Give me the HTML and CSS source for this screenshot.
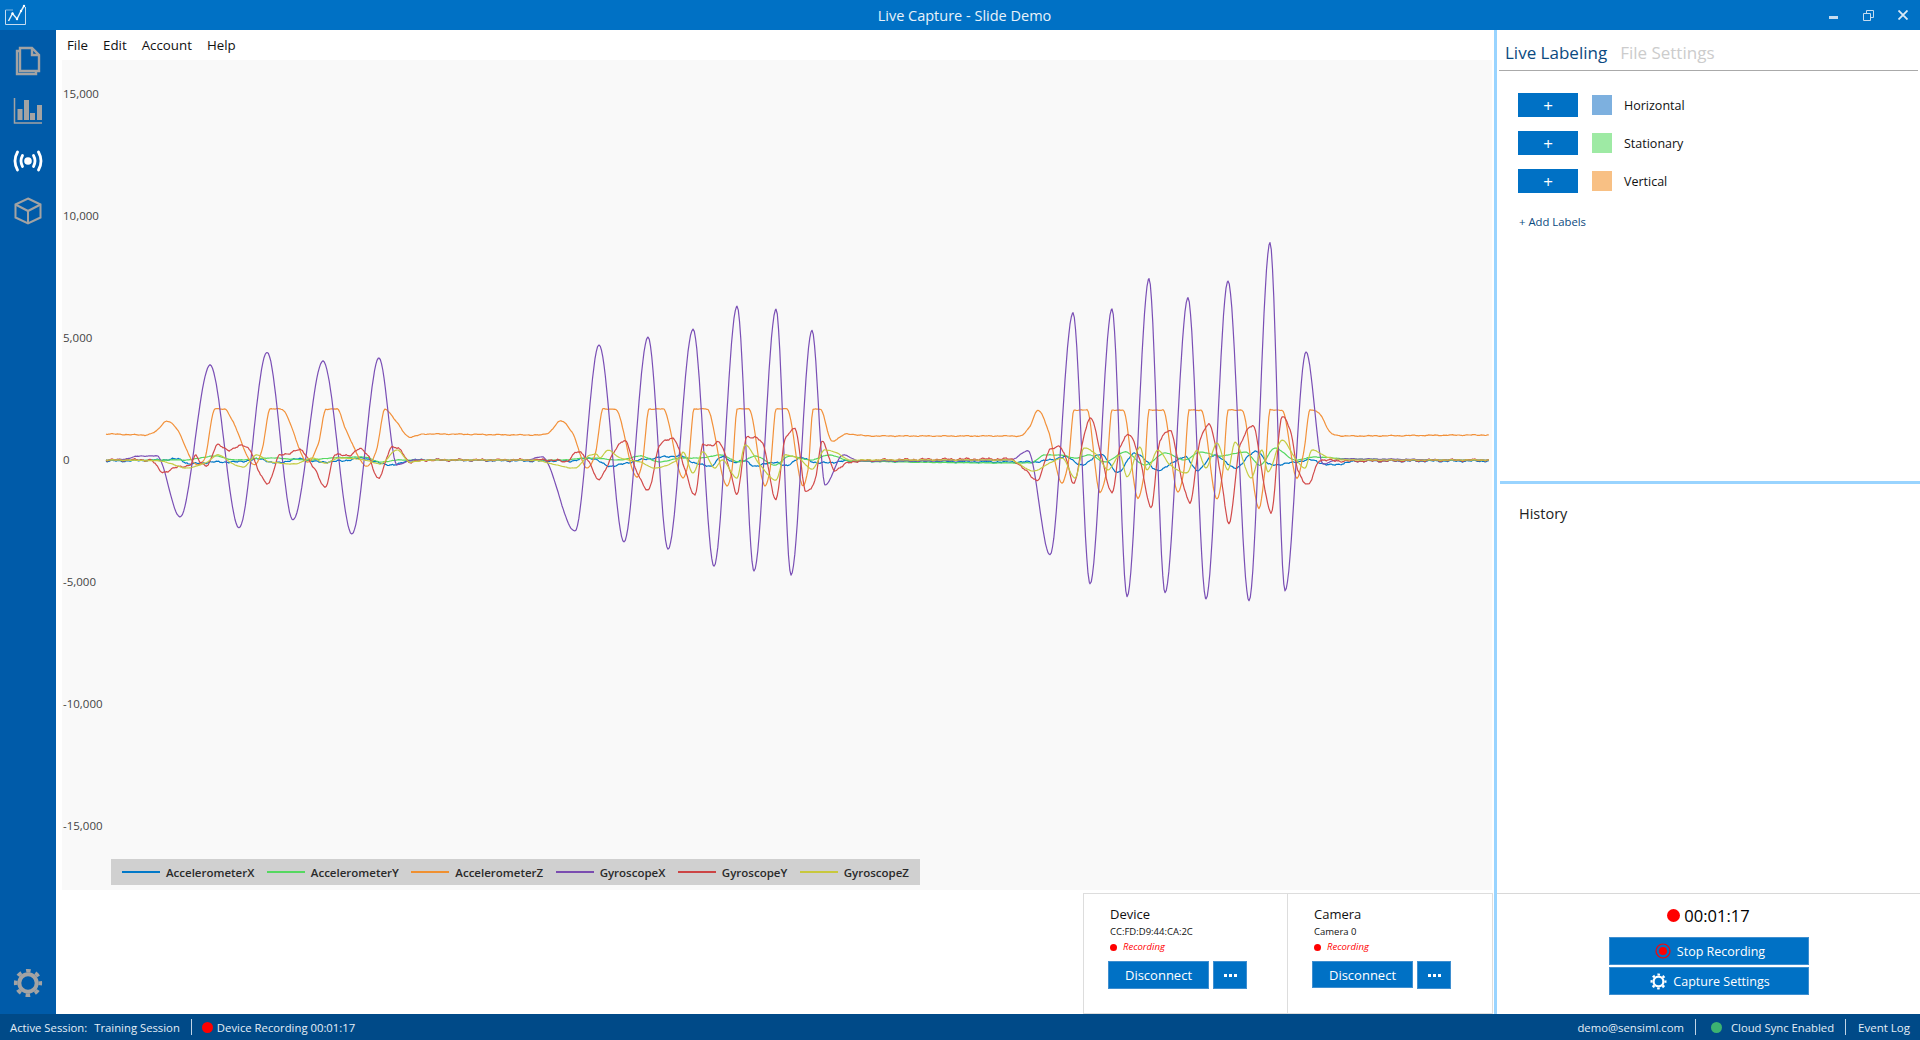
FILE: index.html
```html
<!DOCTYPE html>
<html lang="en">
<head>
  <meta charset="UTF-8">
  <title>Live Capture - Slide Demo</title>
  <link rel="stylesheet" href="styles.css">
</head>
<body>
  <svg class="defs" width="0" height="0">
    <symbol id="gear" viewBox="0 0 30 30">
      <circle cx="15" cy="15" r="8.7" fill="none" stroke="currentColor" stroke-width="4"/>
      <circle cx="15" cy="15" r="12.3" fill="none" stroke="currentColor" stroke-width="3.6" stroke-dasharray="4.6 5.06" stroke-dashoffset="2.3"/>
    </symbol>
    <symbol id="dots" viewBox="0 0 13 3">
      <rect x="0" width="3" height="3" fill="#fff"/>
      <rect x="5" width="3" height="3" fill="#fff"/>
      <rect x="10" width="3" height="3" fill="#fff"/>
    </symbol>
  </svg>

  <header class="titlebar">
    <svg class="logo" width="22" height="22" viewBox="0 0 22 22">
      <path d="M1.500 6V20.500H21.500V3" fill="none" stroke="#c4dcf0" stroke-width="1"/>
      <path d="M1.500 6H9" fill="none" stroke="#7fb4de" stroke-width="1"/>
      <path d="M4.500 17L8.500 9.500L13 15L17 7L20 2" fill="none" stroke="#e4f0f9" stroke-width="1.500"/>
      <circle cx="8.500" cy="9.500" r="1.200" fill="#fff"/>
      <circle cx="13" cy="15" r="1.200" fill="#fff"/>
      <circle cx="17" cy="7" r="1.200" fill="#fff"/>
      <circle cx="20" cy="2" r="1.200" fill="#fff"/>
    </svg>
    <div class="title">Live Capture - Slide Demo</div>
    <div class="winctl">
      <svg width="10" height="10" viewBox="0 0 10 10"><rect x="0" y="6" width="9" height="3" fill="#c5dcf0"/></svg>
      <svg width="11" height="11" viewBox="0 0 11 11"><path d="M.5 3.500H7.500V10.500H.5ZM3.500 3.500V.5H10.500V7.500H7.500" fill="none" stroke="#c5dcf0"/></svg>
      <svg width="10" height="10" viewBox="0 0 10 10"><path d="M.5 .5L9.500 9.500M9.500 .5L.5 9.500" stroke="#dbe9f5" stroke-width="1.800"/></svg>
    </div>
  </header>

  <div class="main">
    <nav class="sidebar">
      <svg class="nav-icon" viewBox="0 0 30 30" fill="none" stroke="currentColor" stroke-width="2.400">
        <path d="M7 2H19L26 9V25H7Z"/>
        <path d="M19 2V9H26"/>
        <path d="M7 5H4V28H23V25"/>
      </svg>
      <svg class="nav-icon" viewBox="0 0 30 30" fill="currentColor">
        <path d="M1.500 2V27H29" fill="none" stroke="currentColor" stroke-width="1.500"/>
        <rect x="4.500" y="13" width="5" height="11"/>
        <rect x="11" y="4" width="5" height="20"/>
        <rect x="17" y="17" width="5" height="7"/>
        <rect x="24" y="9" width="5" height="15"/>
      </svg>
      <svg class="nav-icon active" viewBox="0 0 30 30" fill="none" stroke="currentColor" stroke-width="2.800" stroke-linecap="round">
        <circle cx="15" cy="15" r="3.800" fill="currentColor" stroke="none"/>
        <path d="M9.500 9.500Q6.500 15 9.500 20.500"/>
        <path d="M20.500 9.500Q23.500 15 20.500 20.500"/>
        <path d="M4.500 6Q-.5 15 4.500 24"/>
        <path d="M25.500 6Q30.500 15 25.500 24"/>
      </svg>
      <svg class="nav-icon" viewBox="0 0 30 30" fill="none" stroke="currentColor" stroke-width="2">
        <path d="M15 2.500L27.500 8.500V21.500L15 27.500L2.500 21.500V8.500Z"/>
        <path d="M2.500 8.500L15 15L27.500 8.500M15 15V27.500"/>
      </svg>
      <svg class="nav-gear"><use href="#gear"/></svg>
    </nav>

    <section class="content">
      <div class="menubar">
        <span>File</span>
        <span>Edit</span>
        <span>Account</span>
        <span>Help</span>
      </div>

      <div class="chart">
        <svg id="plot" class="plot" viewBox="62 60 1430 830">
          <g class="axis">
            <text x="63" y="93">15,000</text>
            <text x="63" y="215">10,000</text>
            <text x="63" y="337">5,000</text>
            <text x="63" y="459">0</text>
            <text x="63" y="581">-5,000</text>
            <text x="63" y="703">-10,000</text>
            <text x="63" y="825">-15,000</text>
          </g>
        </svg>
        <div class="legend">
          <span class="key"><i class="c-ax"></i>AccelerometerX</span>
          <span class="key"><i class="c-ay"></i>AccelerometerY</span>
          <span class="key"><i class="c-az"></i>AccelerometerZ</span>
          <span class="key"><i class="c-gx"></i>GyroscopeX</span>
          <span class="key"><i class="c-gy"></i>GyroscopeY</span>
          <span class="key"><i class="c-gz"></i>GyroscopeZ</span>
        </div>
      </div>

      <div class="sources">
        <div class="source">
          <div class="source-name">Device</div>
          <div class="source-id">CC:FD:D9:44:CA:2C</div>
          <div class="source-state"><b></b>Recording</div>
          <div class="source-btns">
            <button class="btn btn-wide">Disconnect</button>
            <button class="btn btn-more"><svg width="13" height="3"><use href="#dots"/></svg></button>
          </div>
        </div>
        <div class="source">
          <div class="source-name">Camera</div>
          <div class="source-id">Camera 0</div>
          <div class="source-state"><b></b>Recording</div>
          <div class="source-btns">
            <button class="btn btn-wide">Disconnect</button>
            <button class="btn btn-more"><svg width="13" height="3"><use href="#dots"/></svg></button>
          </div>
        </div>
      </div>
    </section>

    <aside class="panel">
      <div class="tabs">
        <span class="tab on">Live Labeling</span>
        <span class="tab">File Settings</span>
      </div>
      <div class="labels">
        <div class="label-row">
          <button class="btn btn-add">+</button>
          <span class="swatch s-blue"></span>
          <span>Horizontal</span>
        </div>
        <div class="label-row">
          <button class="btn btn-add">+</button>
          <span class="swatch s-green"></span>
          <span>Stationary</span>
        </div>
        <div class="label-row">
          <button class="btn btn-add">+</button>
          <span class="swatch s-orange"></span>
          <span>Vertical</span>
        </div>
        <a class="add-labels">+ Add Labels</a>
      </div>
      <div class="history">History</div>
      <div class="capture">
        <div class="timer"><b></b>00:01:17</div>
        <button class="btn btn-capture">
          <svg width="16" height="16" viewBox="0 0 16 16"><circle cx="8" cy="8" r="7" fill="none" stroke="#f00" stroke-width="1.200"/><circle cx="8" cy="8" r="4" fill="#f00"/></svg>
          Stop Recording
        </button>
        <button class="btn btn-capture">
          <svg class="capture-gear"><use href="#gear"/></svg>
          Capture Settings
        </button>
      </div>
    </aside>
  </div>

  <footer class="statusbar">
    <span class="session-key">Active Session:</span>
    <span>Training Session</span>
    <span class="sep"></span>
    <span class="dot dot-red"></span>
    <span>Device Recording 00:01:17</span>
    <span class="spacer"></span>
    <span>demo@sensiml.com</span>
    <span class="sep"></span>
    <span class="dot dot-green"></span>
    <span>Cloud Sync Enabled</span>
    <span class="sep"></span>
    <span class="event-log">Event Log</span>
  </footer>

  <script src="chart.js"></script>
</body>
</html>
```

FILE: styles.css
```css
* { box-sizing: border-box; }
html, body { height: 100%; }
body {
  margin: 0;
  display: flex;
  flex-direction: column;
  height: 1040px;
  overflow: hidden;
  font-family: "Open Sans", "Noto Sans", sans-serif;
  font-size: 12px;
  color: #111;
  background: #fff;
}
.defs { position: absolute; }

.titlebar {
  flex: 0 0 30px;
  display: flex;
  align-items: center;
  background: #0071c5;
  color: #e8f2fa;
  padding-left: 4px;
}
.title { flex: 1; text-align: center; font-size: 14.500px; padding-left: 74px; }
.winctl { display: flex; align-items: center; gap: 24px; padding-right: 12px; }

.main { flex: 1; display: flex; min-height: 0; }

.sidebar {
  flex: 0 0 56px;
  display: flex;
  flex-direction: column;
  align-items: center;
  background: #005ba9;
  color: #a3a3a3;
  padding: 6px 0 16px;
}
.nav-icon { width: 30px; height: 30px; margin: 10px 0; }
.nav-icon.active { color: #fff; }
.nav-gear { width: 30px; height: 30px; margin-top: auto; }

.content { flex: 0 0 1438px; display: flex; flex-direction: column; border-right: 1px solid #fff; }
.menubar { flex: 0 0 30px; display: flex; align-items: center; gap: 15px; padding-left: 11px; font-size: 13.300px; color: #111; }

.chart { position: relative; flex: 0 0 830px; margin-left: 6px; margin-right: 1px; background: #f9f9f9; }
.plot { display: block; width: 1430px; height: 830px; }
.axis text { font-size: 11.500px; fill: #444; dominant-baseline: central; }
.line { fill: none; stroke-width: 1.200; stroke-linejoin: round; }

.legend {
  position: absolute;
  left: 49px;
  top: 799px;
  width: 809px;
  height: 26px;
  display: flex;
  align-items: center;
  justify-content: space-between;
  padding: 0 11px;
  background: #d0d0d0;
  font-size: 11.500px;
  font-weight: 600;
  color: #2a2a2a;
}
.key { display: flex; align-items: center; }
.key i { display: block; width: 38px; height: 2px; margin-right: 6px; }
.c-ax { background: #0078c8; }
.c-ay { background: #55d860; }
.c-az { background: #f09030; }
.c-gx { background: #7a4cb0; }
.c-gy { background: #cc4444; }
.c-gz { background: #c8c83c; }

.sources { flex: 1; display: flex; justify-content: flex-end; padding-top: 3px; }
.source {
  width: 205px;
  padding: 10px 0 0 26px;
  border: 1px solid #ddd;
  border-left-width: 0;
}
.source:first-child { border-left-width: 1px; }
.source + .source .btn-wide { height: 27px; }
.source-name { font-size: 13px; line-height: 20px; }
.source-id { font-size: 9.500px; line-height: 14px; margin-top: 1px; }
.source-state { display: flex; align-items: center; font-size: 9.500px; font-style: italic; color: #f00; line-height: 16px; }
.source-state b { width: 7px; height: 7px; border-radius: 50%; background: #f00; margin-right: 6px; }
.source-btns { display: flex; align-items: flex-start; gap: 4px; margin: 6px 0 0 -2px; }

.btn {
  border: 1px solid #3f8fd0;
  padding: 0;
  background: #0071c5;
  color: #fff;
  font-family: inherit;
  display: flex;
  align-items: center;
  justify-content: center;
}
.btn-wide { width: 101px; height: 28px; font-size: 13px; }
.btn-more { width: 34px; height: 28px; }
.btn-add { width: 60px; height: 24px; font-size: 17px; font-weight: 400; border: 0; }

.panel { flex: 1; display: flex; flex-direction: column; border-left: 3px solid #99d4ff; }
.tabs { display: flex; gap: 13px; margin: 0 2px; height: 41px; align-items: center; padding: 4px 6px 0; border-bottom: 1px solid #aaa; }
.tab { font-size: 17px; color: #ccc; }
.tab.on { color: #0b4a80; }
.labels { flex: 0 0 410px; padding: 22px 0 0 21px; display: flex; flex-direction: column; }
.label-row { display: flex; align-items: center; height: 24px; margin-bottom: 14px; font-size: 12.500px; }
.swatch { width: 20px; height: 20px; margin: 0 12px 0 14px; }
.s-blue { background: #7db0df; }
.s-green { background: #9eeaa4; }
.s-orange { background: #f8c084; }
.add-labels { font-size: 11.300px; color: #0b4a80; margin: 7px 0 0 1px; line-height: 16px; }

.history { flex: 1; border-top: 3px solid #99d4ff; margin-left: 3px; padding: 20px 0 0 19px; font-size: 14.500px; color: #222; }

.capture { flex: 0 0 121px; display: flex; flex-direction: column; align-items: center; border-top: 1px solid #d8d8d8; }
.timer { display: flex; align-items: center; font-size: 16.500px; height: 43px; color: #000; }
.timer b { width: 13px; height: 13px; border-radius: 50%; background: #f00; margin-right: 4px; }
.btn-capture { width: 200px; height: 28px; margin-bottom: 2px; gap: 6px; padding-left: 3px; font-size: 12.500px; font-weight: 500; }
.capture-gear { width: 17px; height: 17px; color: #fff; }

.statusbar { flex: 0 0 26px; display: flex; align-items: center; padding: 0 10px; background: #004a88; color: #e4eef7; font-size: 11.300px; }
.session-key { margin-right: 7px; }
.sep { width: 1px; height: 16px; background: #c0d4e6; margin: 0 11px; }
.spacer { flex: 1; }
.dot { width: 11px; height: 11px; border-radius: 50%; margin: 0 4px 0 -1px; }
.dot-red { background: #f00; }
.dot-green { background: #3cb371; margin: 0 9px 0 4px; }
.event-log { font-size: 11.500px; margin-left: 1px; }
```

FILE: chart.js
```js
// sensor traces, anchors are [x, y] in page pixels (y 460 = value 0)
const series = [
  { color: '#0078c8', noise: 0.5, points: [[106,461],[160,460],[178,459],[190,464],[215,462],[235,462],[260,459],[275,463],[300,459],[320,462],[340,461],[365,458],[375,462],[395,465],[410,460],[570,461],[590,458],[610,466],[640,460],[680,456],[695,463],[710,466],[722,457],[735,462],[745,461],[755,466],[775,462],[785,466],[800,458],[820,463],[850,461],[1030,462],[1050,460],[1065,457],[1083,465],[1100,454],[1118,472],[1135,453],[1158,470],[1185,457],[1197,470],[1215,455],[1235,468],[1250,455],[1257,451],[1270,465],[1290,463],[1310,460],[1330,465],[1360,461],[1489,461]] },
  { color: '#55d860', noise: 0.15, points: [[106,460],[150,460],[185,460],[215,456],[235,460],[270,458],[310,460],[330,458],[365,457],[380,462],[400,460],[560,460],[590,458],[620,460],[640,456],[660,462],[680,458],[700,458],[720,455],[740,462],[755,456],[775,465],[790,456],[810,460],[830,455],[850,461],[1030,463],[1045,455],[1060,455],[1075,458],[1090,455],[1105,462],[1125,452],[1145,465],[1165,453],[1185,460],[1200,452],[1220,456],[1245,452],[1260,465],[1275,448],[1295,460],[1315,457],[1350,459],[1489,460]] },
  { color: '#f2913a', noise: 0.25, points: [[106,434],[145,435],[155,432],[167,421],[176,428],[197,465],[204,460],[215,409],[225,409],[232,420],[255,465],[262,450],[270,409],[281,409],[308,462],[318,445],[326,409],[337,409],[346,430],[367,466],[376,452],[385,409],[395,420],[410,437],[425,434],[540,435],[548,433],[561,421],[572,432],[587,468],[595,455],[603,409],[615,409],[637,477],[642,465],[649,409],[663,409],[683,478],[688,465],[694,409],[707,409],[727,486],[732,470],[737,409],[749,409],[765,486],[770,470],[776,409],[787,409],[803,486],[808,470],[813,409],[820,409],[832,441],[847,434],[870,436],[1020,436],[1029,428],[1038,410],[1048,430],[1062,483],[1068,465],[1074,410],[1087,410],[1100,492],[1106,475],[1112,410],[1123,410],[1138,498],[1144,475],[1149,410],[1163,410],[1178,492],[1184,470],[1189,410],[1201,410],[1217,499],[1223,470],[1228,410],[1242,410],[1259,508],[1265,470],[1270,410],[1282,410],[1297,478],[1304,450],[1310,410],[1318,412],[1332,434],[1345,436],[1489,435]] },
  { color: '#7a4fb5', noise: 0.2, points: [[106,460],[125,459],[140,456],[157,456],[180,517],[210,365],[239,528],[267,352],[293,520],[323,361],[352,534],[379,358],[397,465],[412,460],[525,460],[542,457],[575,531],[599,345],[624,542],[648,337],[668,549],[693,329],[714,566],[737,306],[754,571],[776,309],[791,575],[812,330],[825,485],[843,455],[860,461],[1010,460],[1028,451],[1050,555],[1073,313],[1090,584],[1112,309],[1127,597],[1149,279],[1165,593],[1188,298],[1206,599],[1228,281],[1249,601],[1270,243],[1285,591],[1306,352],[1323,464],[1340,459],[1489,460]] },
  { color: '#d24a4a', noise: 0.6, points: [[106,460],[150,460],[163,472],[178,467],[190,465],[196,456],[200,462],[207,465],[218,445],[230,450],[243,445],[250,450],[258,470],[268,483],[280,455],[290,453],[300,450],[315,470],[325,487],[335,455],[350,455],[360,449],[368,455],[378,479],[392,447],[400,450],[410,462],[430,460],[555,460],[565,462],[577,452],[590,463],[598,480],[615,450],[625,441],[636,470],[648,490],[660,445],[673,438],[685,470],[695,495],[703,445],[712,445],[718,442],[730,470],[737,494],[747,437],[755,437],[763,445],[776,499],[785,440],[795,428],[806,492],[815,480],[822,442],[835,470],[850,462],[880,460],[1010,459],[1025,470],[1037,480],[1050,450],[1059,446],[1068,465],[1073,484],[1085,432],[1091,418],[1100,450],[1112,493],[1120,447],[1129,435],[1140,460],[1151,508],[1160,440],[1170,431],[1182,480],[1190,503],[1200,440],[1209,425],[1220,470],[1229,524],[1240,445],[1253,426],[1265,490],[1271,514],[1282,416],[1290,430],[1298,470],[1308,485],[1320,460],[1345,461],[1489,460]] },
  { color: '#c4cc44', noise: 0.15, points: [[106,460],[160,461],[187,468],[207,462],[218,455],[235,465],[243,467],[257,455],[270,462],[295,464],[312,458],[325,463],[340,458],[365,460],[380,464],[397,450],[410,462],[430,460],[530,460],[575,468],[590,455],[596,454],[600,458],[608,450],[620,458],[640,462],[655,468],[680,458],[683,452],[693,473],[703,452],[715,468],[722,460],[737,478],[745,445],[760,465],[776,480],[785,455],[798,458],[812,469],[825,450],[835,452],[850,460],[1010,460],[1033,471],[1050,463],[1062,458],[1075,478],[1084,448],[1097,455],[1108,470],[1120,455],[1127,477],[1140,447],[1147,470],[1158,450],[1170,465],[1187,473],[1197,450],[1206,468],[1217,443],[1228,470],[1235,442],[1251,478],[1262,450],[1268,472],[1282,440],[1295,458],[1305,468],[1312,450],[1330,458],[1350,460],[1489,460]] }
];

function wobble(x, amount) {
  return amount * (Math.sin(x * 0.83) + Math.sin(x * 2.17 + 1.3) * 0.6 + Math.sin(x * 0.31 + 0.7));
}

// monotone cubic through the anchors, flat at every turn
function tracePath(points, noise) {
  const slopes = points.map((p, i) => {
    if (i === 0 || i === points.length - 1) return 0;
    const a = (p[1] - points[i - 1][1]) / (p[0] - points[i - 1][0]);
    const b = (points[i + 1][1] - p[1]) / (points[i + 1][0] - p[0]);
    if (a * b <= 0) return 0;
    return 2 * a * b / (a + b);
  });
  let d = '';
  for (let i = 0; i < points.length - 1; i++) {
    const [x0, y0] = points[i];
    const [x1, y1] = points[i + 1];
    const h = x1 - x0;
    for (let x = x0; x < x1; x += 1.25) {
      const t = (x - x0) / h;
      const y = (2 * t ** 3 - 3 * t ** 2 + 1) * y0 + (t ** 3 - 2 * t ** 2 + t) * h * slopes[i]
        + (-2 * t ** 3 + 3 * t ** 2) * y1 + (t ** 3 - t ** 2) * h * slopes[i + 1];
      d += (d ? 'L' : 'M') + x.toFixed(1) + ' ' + (y + wobble(x, noise)).toFixed(1);
    }
  }
  return d;
}

const plot = document.getElementById('plot');
series.forEach(s => {
  const path = document.createElementNS('http://www.w3.org/2000/svg', 'path');
  path.setAttribute('class', 'line');
  path.setAttribute('stroke', s.color);
  path.setAttribute('d', tracePath(s.points, s.noise));
  plot.appendChild(path);
});
```
